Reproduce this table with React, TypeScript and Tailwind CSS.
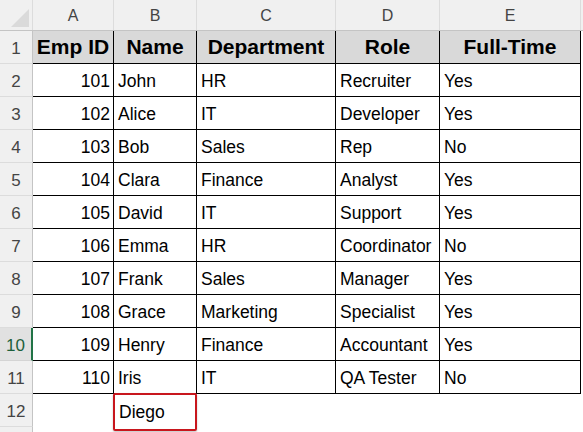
const font = { fontFamily: '"Liberation Sans", Arial, sans-serif' };

const cols = [
  { letter: "A", w: "w-[81px]" },
  { letter: "B", w: "w-[83px]" },
  { letter: "C", w: "w-[139px]" },
  { letter: "D", w: "w-[104px]" },
  { letter: "E", w: "w-[141px]" },
];

const headers = ["Emp ID", "Name", "Department", "Role", "Full-Time"];

const rows: [string, string, string, string, string][] = [
  ["101", "John", "HR", "Recruiter", "Yes"],
  ["102", "Alice", "IT", "Developer", "Yes"],
  ["103", "Bob", "Sales", "Rep", "No"],
  ["104", "Clara", "Finance", "Analyst", "Yes"],
  ["105", "David", "IT", "Support", "Yes"],
  ["106", "Emma", "HR", "Coordinator", "No"],
  ["107", "Frank", "Sales", "Manager", "Yes"],
  ["108", "Grace", "Marketing", "Specialist", "Yes"],
  ["109", "Henry", "Finance", "Accountant", "Yes"],
  ["110", "Iris", "IT", "QA Tester", "No"],
];

function RowHeader({ n, active }: { n: number | string; active?: boolean }) {
  return (
    <div
      className={
        active
          ? "flex h-full w-[33px] shrink-0 items-center justify-center border-b border-r-2 border-b-[#d4d4d4] border-r-[#217346] bg-[#e1e1e1] pt-[3px] text-[17px] text-[#1d5f3b]"
          : "flex h-full w-[33px] shrink-0 items-center justify-center border-b border-r border-b-[#dcdcdc] border-r-[#c4c4c4] bg-[#f0f0f0] pt-[3px] text-[17px] text-[#444]"
      }
    >
      {n}
    </div>
  );
}

export default function App() {
  return (
    <div className="relative h-[432px] w-[583px] overflow-hidden bg-white" style={font}>
      {/* column letters */}
      <div className="flex h-[31px] border-b border-[#c4c4c4] bg-[#f0f0f0]">
        <div className="relative w-[33px] shrink-0 border-r border-[#dcdcdc]">
          <div className="absolute bottom-[3px] right-[3px] h-0 w-0 border-b-[18px] border-l-[18px] border-b-[#dadada] border-l-transparent" />
        </div>
        {cols.map((c) => (
          <div
            key={c.letter}
            className={`${c.w} flex shrink-0 items-center justify-center border-r border-[#dcdcdc] pt-[1px] text-[16px] text-[#444]`}
          >
            {c.letter}
          </div>
        ))}
        <div className="flex-1" />
      </div>

      {/* row 1: headers */}
      <div className="flex h-[33px]">
        <RowHeader n={1} />
        {headers.map((h, i) => (
          <div
            key={h}
            className={`${cols[i].w} flex shrink-0 items-end justify-center border-b border-r border-black bg-[#d9d9d9] pb-[4px] text-[21px] font-bold leading-[24px] text-black`}
          >
            {h}
          </div>
        ))}
      </div>

      {rows.map((r, ri) => (
        <div key={ri} className="flex h-[33px]">
          <RowHeader n={ri + 2} active={ri + 2 === 10} />
          {r.map((v, ci) => (
            <div
              key={ci}
              className={`${cols[ci].w} flex shrink-0 items-end border-b border-r border-black pb-[5px] text-[17.5px] leading-[20px] text-black ${
                ci === 0 ? "justify-end pr-[3px]" : "justify-start pl-[4px]"
              }`}
            >
              {v}
            </div>
          ))}
        </div>
      ))}

      {/* row 12 */}
      <div className="flex h-[33px]">
        <RowHeader n={12} />
        <div className="w-[81px] shrink-0" />
        <div className="flex w-[83px] shrink-0 items-end pb-[5px] pl-[5px] text-[17.5px] leading-[20px] text-black">
          Diego
        </div>
      </div>
      <div className="flex h-[33px]">
        <RowHeader n="" />
      </div>

      {/* highlight annotation */}
      <div className="absolute left-[113px] top-[393px] h-[38px] w-[84px] rounded-[2px] border-2 border-[#c8161d] shadow-[0_1px_2px_rgba(0,0,0,0.25)]" />
    </div>
  );
}
